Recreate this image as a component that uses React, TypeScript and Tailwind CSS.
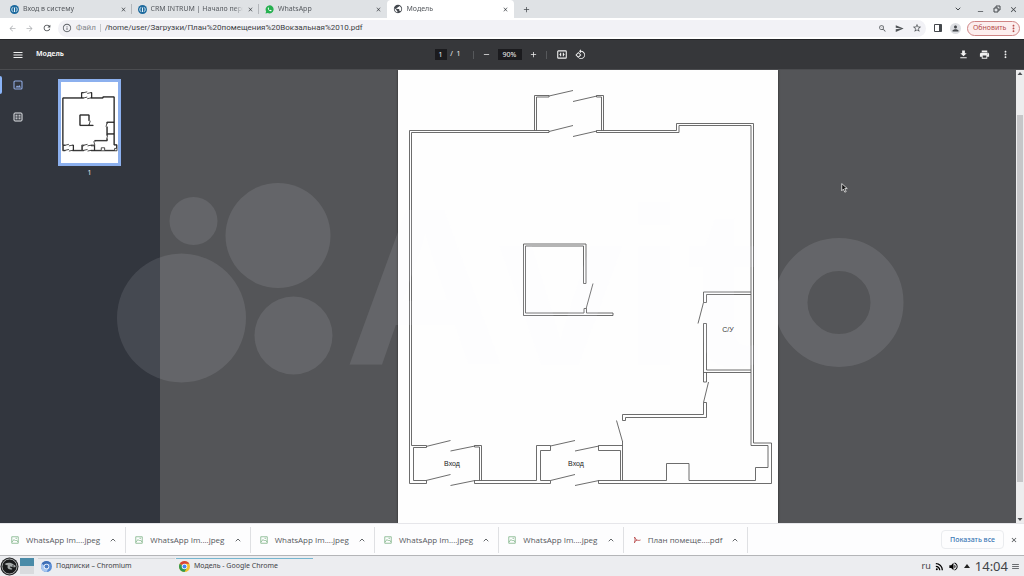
import React from 'react';
import {
  MdAdd,
  MdClose,
  MdFileDownload,
  MdInfoOutline,
  MdMenu,
  MdMoreVert,
  MdOutlineArrowBack,
  MdOutlineArrowForward,
  MdOutlineRotate90DegreesCcw,
  MdPerson,
  MdPrint,
  MdPublic,
  MdRefresh,
  MdRemove,
  MdRssFeed,
  MdSend,
  MdStarOutline,
  MdVolumeUp,
  MdZoomOut,
} from 'react-icons/md';
import { ChevronDown, ChevronUp } from 'lucide-react';

type TabKind = 'intrum' | 'whatsapp' | 'file';

interface Tab {
  title: string;
  kind: TabKind;
  active?: boolean;
  divider?: boolean;
}

const tabs: Tab[] = [
  { title: 'Вход в систему', kind: 'intrum', divider: true },
  { title: 'CRM INTRUM | Начало периода', kind: 'intrum', divider: true },
  { title: 'WhatsApp', kind: 'whatsapp' },
  { title: 'Модель', kind: 'file', active: true },
];

const downloads = [
  { name: 'WhatsApp Im....jpeg', pdf: false },
  { name: 'WhatsApp Im....jpeg', pdf: false },
  { name: 'WhatsApp Im....jpeg', pdf: false },
  { name: 'WhatsApp Im....jpeg', pdf: false },
  { name: 'WhatsApp Im....jpeg', pdf: false },
  { name: 'План помеще....pdf', pdf: true },
];

const TabIcon = ({ kind }: { kind: TabKind }) => {
  if (kind === 'whatsapp') {
    return (
      <svg viewBox="0 0 18 18" className="size-[9px] shrink-0">
        <path
          d="M1 17l1.300-4.300A8 8 0 1 1 5.500 15.800z"
          fill="#25b04f"
        />
        <path
          d="M6 5c-1.500 2 1.500 7 5.500 7.500 1.500 0 2-1.500 1.500-2l-2-1-1 1C8.500 10 7.500 9 7.200 8l.8-1-.8-2z"
          fill="#fff"
        />
      </svg>
    );
  }
  if (kind === 'file') {
    return <MdPublic size={10} className="shrink-0 text-[#44494f]" />;
  }
  return (
    <svg viewBox="0 0 18 18" className="size-[9px] shrink-0">
      <circle cx="9" cy="9" r="9" fill="#1d6a9e" />
      <path
        d="M6 13.500A5.500 5.500 0 0 1 6 4.500M12 13.500A5.500 5.500 0 0 0 12 4.500M9 5V14"
        fill="none"
        stroke="#e4f1f8"
        strokeWidth="2"
      />
    </svg>
  );
};

const TabStrip = () => (
  <div className="flex h-[18px] shrink-0 items-stretch bg-[#dfe2e5] pl-1">
    <div className="flex w-[510px]" role="tablist">
      {tabs.map((tab) => (
        <div
          key={tab.title}
          role="tab"
          aria-selected={Boolean(tab.active)}
          className={`flex min-w-0 flex-1 items-center gap-1 pr-1 pl-1.5 ${
            tab.active ? 'rounded-t bg-white' : ''
          }`}
        >
          <TabIcon kind={tab.kind} />
          <span className="flex-1 overflow-hidden mask-r-from-90% text-[7px] whitespace-nowrap text-[#55595e]">
            {tab.title}
          </span>
          <button type="button" aria-label="Закрыть вкладку">
            <MdClose size={7} />
          </button>
          <span
            className={`-mr-1 h-2.5 w-px ${tab.divider ? 'bg-[#b4b7bb]' : ''}`}
          />
        </div>
      ))}
    </div>
    <button type="button" aria-label="Новая вкладка" className="ml-2">
      <MdAdd size={9} />
    </button>
    <div className="ml-auto flex items-center gap-2 pr-1.5">
      <button type="button" aria-label="Поиск вкладок" className="mr-1.5">
        <ChevronDown size={8} strokeWidth={3} />
      </button>
      <button type="button" aria-label="Свернуть" className="pt-1">
        <MdRemove size={9} />
      </button>
      <button type="button" aria-label="Восстановить">
        <svg
          viewBox="0 0 16 16"
          className="size-2"
          fill="none"
          stroke="currentColor"
          strokeWidth="2"
        >
          <path d="M2 6h8v8H2zM6 6V2h8v8h-4" />
        </svg>
      </button>
      <button type="button" aria-label="Закрыть">
        <MdClose size={9} />
      </button>
    </div>
  </div>
);

const AddressBar = () => (
  <div className="flex h-[21px] shrink-0 items-center bg-white pr-1 pb-px pl-2">
    <div className="flex w-[50px] items-center gap-2">
      <button type="button" aria-label="Назад" className="text-[#b3b5b8]">
        <MdOutlineArrowBack size={9} />
      </button>
      <button type="button" aria-label="Вперёд" className="text-[#b3b5b8]">
        <MdOutlineArrowForward size={9} />
      </button>
      <button type="button" aria-label="Обновить страницу">
        <MdRefresh size={10} />
      </button>
    </div>
    <div className="flex h-[17px] flex-1 items-center rounded-full bg-[#f2f2f6] px-1">
      <MdInfoOutline size={10} className="text-[#5f6368]" />
      <label
        htmlFor="url"
        className="ml-1 font-[Roboto,sans-serif] text-[8px] text-[#85888c]"
      >
        Файл
      </label>
      <span className="mx-1 h-2 w-px bg-[#c5c7ca]" />
      <input
        id="url"
        className="min-w-0 flex-1 bg-transparent font-[Roboto,sans-serif] text-[8px] text-[#3c4043] outline-none"
        defaultValue="/home/user/Загрузки/План%20помещения%20Вокзальная%2010.pdf"
      />
      <div className="flex items-center gap-2 text-[#505458]">
        <button type="button" aria-label="Масштаб">
          <MdZoomOut size={9} />
        </button>
        <button type="button" aria-label="Отправить">
          <MdSend size={9} />
        </button>
        <button type="button" aria-label="В закладки">
          <MdStarOutline size={10} />
        </button>
      </div>
    </div>
    <button type="button" aria-label="Боковая панель" className="ml-2">
      <svg viewBox="0 0 16 16" className="size-2">
        <path d="M1 1h14v14H1z" fill="none" stroke="#44484c" strokeWidth="2" />
        <path d="M10 1h5v14h-5z" fill="#44484c" />
      </svg>
    </button>
    <button
      type="button"
      aria-label="Профиль"
      className="ml-2 flex size-[11px] items-center justify-center rounded-full bg-[#dddfe3]"
    >
      <MdPerson size={9} />
    </button>
    <button
      type="button"
      className="ml-1.5 flex h-[15px] w-[53px] items-center justify-between rounded-full border border-[#cf8585] bg-[#fceeee] pl-[5px] text-[7px] text-[#b84f4d]"
    >
      Обновить
      <MdMoreVert size={11} />
    </button>
  </div>
);

const ViewerToolbar = () => (
  <div className="grid h-[31px] shrink-0 grid-cols-[1fr_auto_1fr] items-center border-t border-b border-t-[#242528] border-b-[#4b4c4f] bg-[#36373a] text-[#f1f1f1]">
    <div className="flex items-center gap-3 pl-3">
      <button type="button" aria-label="Меню">
        <MdMenu size={12} />
      </button>
      <h1 className="text-[7px] font-bold">Модель</h1>
    </div>
    <div className="flex items-center pr-1 text-[7px]">
      <input
        aria-label="Страница"
        className="h-[11px] w-3 bg-[#1b1b1e] text-center"
        defaultValue="1"
      />
      <span className="w-2.5 text-center">/</span>
      <span className="w-1">1</span>
      <span className="mr-2 ml-3 h-2 w-px bg-[#56585b]" />
      <button type="button" aria-label="Уменьшить">
        <MdRemove size={9} />
      </button>
      <input
        aria-label="Масштаб страницы"
        className="ml-[7px] h-[11px] w-6 bg-[#1b1b1e] text-center"
        defaultValue="90%"
      />
      <button type="button" aria-label="Увеличить" className="ml-[7px]">
        <MdAdd size={9} />
      </button>
      <span className="mr-2.5 ml-2 h-2 w-px bg-[#56585b]" />
      <button type="button" aria-label="По размеру страницы">
        <svg
          viewBox="0 0 22 20"
          className="h-[9px] w-2.5"
          fill="none"
          stroke="currentColor"
          strokeWidth="2.4"
        >
          <rect x="1.500" y="2" width="19" height="16" rx="1.500" />
          <path d="M8 6v8M14 6v8M5.500 10h3M13.500 10h3" />
        </svg>
      </button>
      <button type="button" aria-label="Повернуть" className="ml-2">
        <MdOutlineRotate90DegreesCcw size={11} />
      </button>
    </div>
    <div className="flex items-center justify-end gap-2.5 pr-[13px]">
      <button type="button" aria-label="Скачать">
        <MdFileDownload size={11} />
      </button>
      <button type="button" aria-label="Печать">
        <MdPrint size={11} />
      </button>
      <button type="button" aria-label="Ещё">
        <MdMoreVert size={11} />
      </button>
    </div>
  </div>
);

// all walls and door leaves of the floor plan
const PlanLines = () => (
  <g fill="none">
    {/* left wall */}
    <path d="M549 132.500V130.500H409.500V483.500H426.500V480.500H413.500V447.500H426.500V445.500H411.500V132.500Z" />
    {/* right wall with the niche at the bottom */}
    <path d="M596.500 132.500V130.500H676.500V123.500H753.500V443H771.500V483.500H598.500V480.500H666.500V463.500H689V480.500H755.500V467.500H768V445.500H751V125.500H679V132.500Z" />
    {/* upper vestibule */}
    <path d="M534.500 130.500V95.500H549V97H536.500V130.500M603.500 130.500V95.500H596.500V97H601.500V130.500" />
    {/* lower vestibules */}
    <path d="M481.500 480.500V445.500H474.500V447H479.500V480.500" />
    <path d="M474.500 480.500V483.500H550.500V480.500H540.500V450.500H550.500V445.500H536.500V480.500Z" />
    <path d="M598.500 445.500V450.500H620.500V480.500M598.500 445.500H622.500M622.500 441V480.500" />
    {/* inner room */}
    <path d="M583.500 283.500H586V244H523.500V315.500H613V313H586.500V308.500H584V313H525.500V246H583.500Z" />
    {/* bathroom and utility room */}
    <path d="M751 292H703.500V302.500H706.500V294.500H751M751 370H706.500V323.500H703.500V382H706.500V372.500H751M703.500 372.500H707" />
    <path d="M703.500 402.500H706.500V417.500H625.500V420.500H622.500V414.500H703.500Z" />
    {/* doors */}
    <path d="M549 96L573 90.500M573 101.500L597 96M549 131.500L573 125.500M573 136.500L597 131" />
    <path d="M426 446.500L450.500 440.500M450.500 451L475 446M426 480.500L450.500 474.500M450.500 485.500L475 480.500" />
    <path d="M550.500 446L575 440.500M575 451L599 446M550.500 480.500L575 474.500M575 485.500L599 480.500" />
    <path d="M593 283.500L586 309M703.500 302.500L698 323.500M708.500 382L703.500 402.500M616.500 420.500L622.500 441.500" />
  </g>
);

const Sidebar = () => (
  <aside className="flex w-40 shrink-0 bg-[#32363e] text-[#e8eaed]">
    <div className="flex w-9 flex-col items-center gap-[22px] pt-2.5">
      <button
        type="button"
        aria-label="Миниатюры"
        className="relative text-[#8fa9e0]"
      >
        <span className="absolute -top-1 -left-[13px] h-[18px] w-0.5 rounded-r bg-[#8ab4f8]" />
        <svg
          viewBox="0 0 20 20"
          className="size-2.5"
          fill="none"
          stroke="currentColor"
          strokeWidth="2.2"
        >
          <rect x="2" y="2" width="16" height="16" rx="2" />
          <path d="M5 15l3-4 2.500 2 2-3L16 15z" fill="currentColor" stroke="none" />
        </svg>
      </button>
      <button type="button" aria-label="Структура документа">
        <svg
          viewBox="0 0 20 20"
          className="size-2.5"
          fill="none"
          stroke="currentColor"
          strokeWidth="2"
        >
          <rect x="2" y="2" width="16" height="16" rx="2" />
          <path d="M5 6.500h4M5 10h4M5 13.500h4M11 6.500h4M11 10h4M11 13.500h4" />
        </svg>
      </button>
    </div>
    <div className="flex flex-col items-center pt-[9px] pl-[22px]">
      <button
        type="button"
        aria-label="Страница 1"
        className="border-3 border-[#8cb0ee] bg-white"
      >
        <svg viewBox="398 25 380 540" className="h-[81px] w-[57px]">
          <g stroke="#111" strokeWidth="5">
            <PlanLines />
          </g>
        </svg>
      </button>
      <span className="mt-0.5 text-[7px]">1</span>
    </div>
  </aside>
);

const Watermark = () => (
  <svg
    viewBox="0 -60 800 360"
    className="pointer-events-none absolute top-[36px] left-[110px] h-[360px] w-[800px]"
    fill="#f8f8fc"
    fillOpacity="0.1"
  >
    <circle cx="83.500" cy="55" r="24" />
    <circle cx="168" cy="69.500" r="52.500" />
    <circle cx="71.500" cy="152" r="64.500" />
    <circle cx="183.500" cy="169.500" r="39" />
    <text
      x="234"
      y="199"
      fontSize="225"
      fontWeight="700"
      className="font-['Liberation_Sans',sans-serif]"
    >
      Avit
    </text>
    <circle
      cx="729"
      cy="136.500"
      r="48"
      fill="none"
      stroke="#f8f8fc"
      strokeOpacity="0.1"
      strokeWidth="33"
    />
  </svg>
);

const Cursor = () => (
  <svg
    viewBox="0 0 12 18"
    className="absolute top-[113px] left-[841px] h-[10px] w-[7px]"
  >
    <path
      d="M1 1v13l3-3 2.500 5.500 2.500-1L6.500 10H11z"
      fill="#151515"
      stroke="#e8e8e8"
      strokeWidth="1.500"
    />
  </svg>
);

const Viewer = () => (
  <div className="relative flex min-h-0 flex-1 overflow-hidden bg-[#545558]">
    <Sidebar />
    <main className="flex flex-1 justify-center">
      <div className="h-full w-[380px] overflow-hidden bg-[#fefefe] shadow-[0_0_2px_#222]">
        <svg viewBox="398 70 380 453" className="h-[453px] w-[380px]">
          <g stroke="#5c5c5c" strokeWidth="0.900">
            <PlanLines />
          </g>
          <g
            fill="#222"
            fontSize="7"
            textAnchor="middle"
            className="font-['Liberation_Sans',sans-serif]"
          >
            <text x="452" y="466">
              Вход
            </text>
            <text x="576" y="466">
              Вход
            </text>
            <text x="728" y="332">
              С/У
            </text>
          </g>
        </svg>
      </div>
    </main>
    <div className="flex w-2 flex-col items-center bg-[#ededee] pt-[45px]">
      <div className="h-[367px] w-1.5 bg-[#c6c6c8]" />
    </div>
    <svg
      viewBox="0 0 8 453"
      className="absolute top-0 right-0 h-[453px] w-2"
      fill="#505356"
    >
      <path d="M4 2l2.500 3h-5zM4 451l2.500-3h-5z" />
    </svg>
    <Watermark />
    <Cursor />
  </div>
);

const DownloadIcon = ({ pdf }: { pdf: boolean }) =>
  pdf ? (
    <svg
      viewBox="0 0 16 16"
      className="size-2 shrink-0"
      fill="none"
      stroke="#b8484a"
      strokeWidth="1.800"
    >
      <path d="M3 2c1 3 3 5 5 6s5 1 7 0M8 8c-2 1-4 3-6 5M3 2c2 4 1 8 0 12" />
    </svg>
  ) : (
    <svg
      viewBox="0 0 16 16"
      className="size-2 shrink-0"
      fill="none"
      stroke="#7fb487"
      strokeWidth="1.600"
    >
      <path d="M1.500 1.500h13v13h-13zM2 12l4-5 3 3 2-2 3 4M9 4.500h3" />
    </svg>
  );

const DownloadShelf = () => (
  <div className="flex h-[33px] shrink-0 items-center border-t border-b border-t-[#e6e6ea] border-b-[#b4b5b8] bg-[#fdfdfe] pr-1.5">
    <div className="flex h-[26px] w-[748px] pl-0.5">
      {downloads.map((item, index) => (
        <div
          // eslint-disable-next-line react/no-array-index-key
          key={index}
          className="flex min-w-0 flex-1 items-center border-r border-[#dfe0e3] pr-2 pl-[9px]"
        >
          <DownloadIcon pdf={item.pdf} />
          <span className="ml-[7px] flex-1 font-['Open_Sans',sans-serif] text-[8px] whitespace-nowrap text-[#55585d]">
            {item.name}
          </span>
          <button type="button" aria-label="Параметры файла">
            <ChevronUp size={8} strokeWidth={2.5} />
          </button>
        </div>
      ))}
    </div>
    <button
      type="button"
      className="ml-auto flex h-[19px] items-center rounded border border-[#eaecef] px-2 pt-px text-[7px] font-medium text-[#3a78b5]"
    >
      Показать все
    </button>
    <button type="button" aria-label="Закрыть панель" className="ml-1.5">
      <MdClose size={8} />
    </button>
  </div>
);

const ChromeLogo = ({ chromium = false }: { chromium?: boolean }) => (
  <svg viewBox="0 0 22 22" className="size-[11px] shrink-0">
    <circle cx="11" cy="11" r="11" fill={chromium ? '#5c8fd6' : '#f2c230'} />
    <path
      d="M11 11L1.500 5.500A11 11 0 0 1 20.500 5.500H11z"
      fill={chromium ? '#3f6fb5' : '#d8453a'}
    />
    <path
      d="M1.500 5.500A11 11 0 0 0 11 22L15.800 13.700H11z"
      fill={chromium ? '#a9c8f0' : '#2f9a50'}
    />
    <circle cx="11" cy="11" r="5.500" fill="#fff" />
    <circle cx="11" cy="11" r="4" fill={chromium ? '#4a7cc4' : '#4285f4'} />
  </svg>
);

const Taskbar = () => (
  <footer className="flex h-5 shrink-0 items-center bg-[#ecedf0] pr-1 text-[#3f4347]">
    <button type="button" aria-label="Меню приложений">
      <svg viewBox="0 0 38 38" className="size-[19px]">
        <circle cx="19" cy="19" r="18" fill="#191b1c" />
        <circle
          cx="19"
          cy="19"
          r="15"
          fill="none"
          stroke="#d9dcdc"
          strokeWidth="1.500"
        />
        <path
          d="M9 14c6-4 14-3 18 1 3 1 5 3 4 5-4 1-7 0-10-1-2 0-2 2 1 3 4 1 3 4-1 3-6-1-7-5-5-8-2-1-5-1-7-3z"
          fill="#a4a9a9"
        />
        <circle cx="26" cy="18" r="1.500" fill="#191b1c" />
      </svg>
    </button>
    <div className="ml-px flex h-4 w-3.5 flex-col">
      <span className="h-2 bg-[#4a8ba8]" />
      <span className="h-2 bg-[#d9dbde]" />
    </div>
    <button
      type="button"
      className="ml-1 flex h-4 w-[137px] items-center gap-1 border-t border-[#d3d6d9] pl-[3px] text-[7px]"
    >
      <ChromeLogo chromium />
      Подписки – Chromium
    </button>
    <button
      type="button"
      className="ml-px flex h-4 w-[137px] items-center gap-1 border-t border-[#76b6d0] pl-[3px] text-[7px]"
    >
      <ChromeLogo />
      Модель - Google Chrome
    </button>
    <div className="ml-auto flex items-center gap-[3px]">
      <span className="text-[9px]">ru</span>
      <MdRssFeed size={11} className="text-black" />
      <MdVolumeUp size={11} className="text-black" />
      <svg viewBox="0 0 12 8" className="mx-0.5 h-1 w-1.5">
        <path d="M6 0l6 8H0z" fill="#222" />
      </svg>
      <time className="text-[13px] leading-none">14:04</time>
      <MdMenu size={9} />
    </div>
  </footer>
);

const App = () => (
  <div className="flex h-screen flex-col overflow-hidden bg-white font-['Noto_Sans',sans-serif] text-[#45494d]">
    <TabStrip />
    <AddressBar />
    <ViewerToolbar />
    <Viewer />
    <DownloadShelf />
    <Taskbar />
  </div>
);

export default App;
